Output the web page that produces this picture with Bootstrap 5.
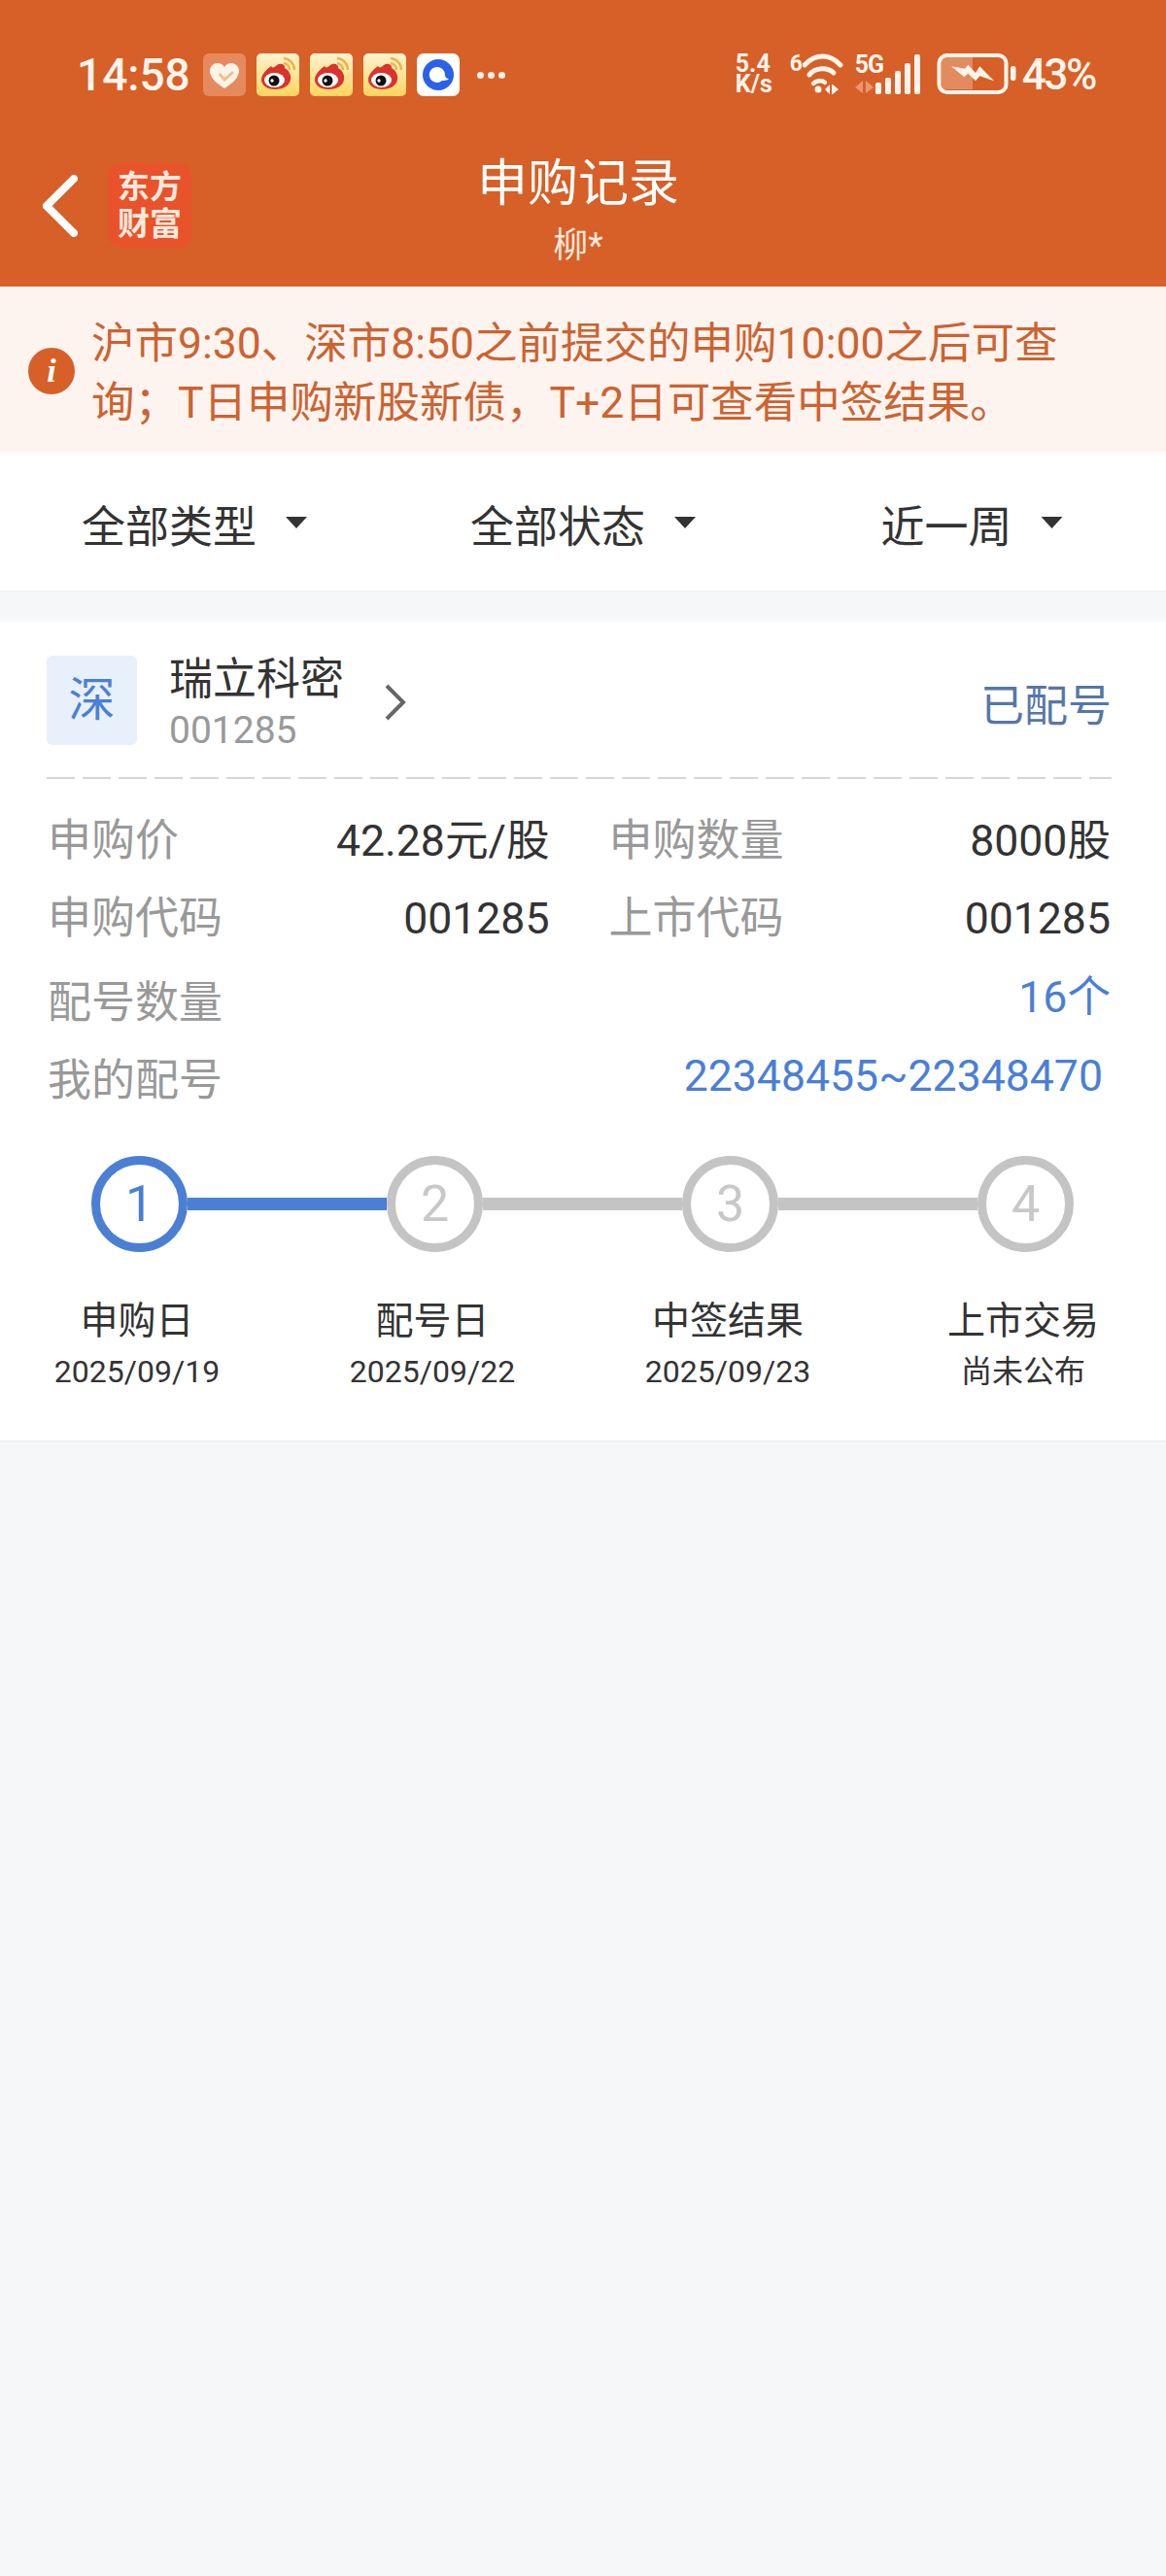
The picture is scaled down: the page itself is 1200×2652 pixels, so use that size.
<!DOCTYPE html>
<html lang="zh-CN">

<head>
    <meta charset="UTF-8">
    <meta name="viewport" content="width=device-width, initial-scale=1.0">
    <title>申购记录</title>
    <link href="https://cdn.jsdelivr.net/npm/bootstrap@5.3.3/dist/css/bootstrap.min.css" rel="stylesheet">
    <style>
        body {
            font-family: Roboto, "Noto Sans CJK SC", sans-serif;
            background-color: #f6f7f9;
            color: #333;
            width: 1200px;
            min-height: 2652px;
            font-size: 44.6px;
        }

        /* 顶部橙色区 */
        .top-wrap { background: #d66028; height: 295px; color: #fff; }
        .status-bar { height: 110px; padding: 55px 73px 0 79px; }
        .clock { font-size: 46px; font-weight: 500; line-height: 44px; color: #fff4ec; margin-right: 13px; }
        .tile-list { gap: 11px; }
        .tile { width: 44px; height: 44px; display: block; }
        .more-dots { gap: 4px; margin-left: 18px; }
        .more-dots i { width: 7px; height: 7px; background: #fdeee4; border-radius: 50%; display: block; }
        .speed { font-size: 25px; font-weight: 700; line-height: 21px; width: 38px; color: #fff4ec; }
        .wifi-six { font-size: 23px; font-weight: 700; line-height: 22px; width: 13px; margin-left: 18px; color: #fff4ec; }
        .net-col { width: 21px; margin-left: 10px; }
        .net-five { font-size: 25px; font-weight: 700; line-height: 24px; letter-spacing: -1px; color: #fff4ec; white-space: nowrap; height: 27px; }
        .batt-num { font-size: 44px; font-weight: 500; line-height: 44px; letter-spacing: -2.4px; color: #fff4ec; margin-left: 5px; }

        .nav-row { padding-top: 50px; }
        .nav-left { width: 200px; padding-left: 44px; margin-top: 8px; gap: 31px; }
        .app-logo { width: 86px; height: 87px; background: #e8532b; border-radius: 14px; font-size: 33px; font-weight: 700; line-height: 38px; color: #fde8dc; }
        .nav-mid { flex: 1; }
        .nav-right { width: 210px; }
        .page-title { font-size: 52px; line-height: 60px; }
        .page-sub { font-size: 36px; line-height: 44px; margin-top: 11px; color: #fbe6da; }

        /* 提示条 */
        .notice-bar { background: #fdf4f0; height: 170px; padding: 9px 100px 0 29px; gap: 17px; color: #cc6330; }
        .info-dot { width: 48px; height: 48px; flex: none; background: #d66028; color: #fff; font-family: "Liberation Serif", serif; font-style: italic; font-weight: 700; font-size: 34px; line-height: 48px; margin-top: -5px; }
        .notice-txt { line-height: 61px; font-size: 44.5px; }

        /* 筛选 */
        .filter-bar { background: #fff; height: 144px; border-bottom: 1px solid #f0f1f3; padding-top: 15px; }
        .filter-item { gap: 30px; font-size: 45px; }
        .tri { width: 22px; height: 12px; margin-top: -12px; background: #333; clip-path: polygon(0 0, 100% 0, 50% 100%); }

        /* 卡片 */
        .sub-card { background: #fff; margin-top: 31px; height: 844px; border-bottom: 1px solid #eeeff1; padding-top: 35px; }
        .sub-head { margin: 0 56px 0 48px; height: 92px; }
        .ex-box { width: 93px; height: 92px; background: #e8f0fb; color: #4a7fd4; border-radius: 6px; font-size: 48px; margin-right: 33px; }
        .stock-block { align-self: flex-start; }
        .stock-name { line-height: 50px; font-size: 45px; }
        .stock-code { color: #999; font-size: 39px; line-height: 46px; margin-top: 4px; }
        .name-arrow { margin-left: 42px; margin-top: 4px; }
        .state-txt { color: #5577a8; font-size: 45px; padding-top: 14px; }
        .dash-line { height: 2px; margin: 33px 56px 0 48px; background: repeating-linear-gradient(90deg, #d6d6d6 0 29px, transparent 29px 37px); }

        .info-grid { padding: 24px 57px 0 49px; }
        .info-line { height: 80px; gap: 61px; }
        .info-cell { flex: 1 1 0; }
        .lab { color: #999; font-size: 45px; }
        .blue-val { color: #4a7fd4; }
        .info-line.qty { margin-top: 7px; }
        .qty .blue-val { padding-bottom: 12px; }
        .nums .blue-val { padding-bottom: 10px; padding-right: 8px; }

        /* 进度 */
        .step-track { padding: 37px 0 0 94px; }
        .step-dot { width: 99px; height: 99px; flex: none; border: 9px solid #c4c4c4; color: #c8c8c8; font-size: 52px; font-weight: 400; }
        .step-dot.on { border-color: #4a7fd4; color: #4a7fd4; }
        .step-bar { width: 205px; height: 13px; background: #c4c4c4; }
        .step-bar.on { background: #4a7fd4; }
        .step-text { padding: 46px 0 0 1px; gap: 24px; }
        .step-col { width: 280px; }
        .step-name { font-size: 39px; line-height: 50px; }
        .step-date { font-size: 32px; line-height: 44px; margin-top: 5px; }
    </style>
</head>

<body>
    <svg width="0" height="0" class="d-block position-absolute">
        <defs>
            <linearGradient id="wbBg" x1="0" y1="0" x2="0" y2="1">
                <stop offset="0" stop-color="#fff3cf" />
                <stop offset="1" stop-color="#fbd55e" />
            </linearGradient>
            <symbol id="wbTile" viewBox="0 0 44 44">
                <rect width="44" height="44" rx="5" fill="url(#wbBg)" />
                <path d="M28 5a12 12 0 0 1 11 12M28 10a7 7 0 0 1 6 7" fill="none" stroke="#eeb24a" stroke-width="2.4" />
                <path d="M5 27C5 21 11 16 15 13C16 15 18 15 21 12C25 9 30 12 29 15C33 17 36 22 35 27C34 34 26 37 19 37C11 37 5 33 5 27Z" fill="#d9342b" />
                <ellipse cx="18.500" cy="27.500" rx="10.500" ry="7.500" fill="#fff" />
                <circle cx="18" cy="28" r="5.500" fill="#111" />
                <circle cx="16" cy="28" r="1.700" fill="#fff" />
            </symbol>
        </defs>
    </svg>

    <div class="top-wrap">
        <div class="status-bar d-flex justify-content-between align-items-start">
            <div class="d-flex align-items-center">
                <span class="clock">14:58</span>
                <div class="tile-list d-flex">
                    <svg class="tile" viewBox="0 0 44 44">
                        <rect width="44" height="44" rx="6" fill="#e68a5e" />
                        <path d="M22 36C14 31 7 25 7 18C7 13 11 10 15 10C18 10 20 11 22 14C24 11 26 10 29 10C33 10 37 13 37 18C37 25 30 31 22 36Z" fill="#fdf3e6" />
                        <path d="M17 21l5 6 9-8" fill="none" stroke="#eec08f" stroke-width="3" />
                    </svg>
                    <svg class="tile"><use href="#wbTile" /></svg>
                    <svg class="tile"><use href="#wbTile" /></svg>
                    <svg class="tile"><use href="#wbTile" /></svg>
                    <svg class="tile" viewBox="0 0 44 44">
                        <rect width="44" height="44" rx="7" fill="#fff" />
                        <circle cx="22" cy="22" r="16" fill="#2962e8" />
                        <path d="M20 14a8 8 0 0 1 9 8C29 25 31 26 33 26C31 28 28 28 26 28A8 8 0 1 1 20 14Z" fill="#fff" />
                    </svg>
                </div>
                <div class="more-dots d-flex"><i></i><i></i><i></i></div>
            </div>
            <div class="d-flex align-items-start">
                <div class="speed">5.4<br>K/s</div>
                <span class="wifi-six">6</span>
                <svg width="44" height="44" viewBox="828 55 44 44" fill="none" stroke="#fff4ec" stroke-linecap="round">
                    <path d="M830 67C841 55 856 55 867 67" stroke-width="5" />
                    <path d="M835 77C841 69 854 69 860 75" stroke-width="5" />
                    <path d="M839 86C842 83 848 82 851 85" stroke-width="4.500" />
                    <circle cx="844" cy="92" r="3.500" fill="#fff4ec" stroke="none" />
                    <path d="M851 92l5-5v10zM859 87l6 5-6 5zM858 87h1v10h-1z" fill="#fff4ec" stroke="none" />
                </svg>
                <div class="net-col">
                    <div class="net-five">5G</div>
                    <svg class="d-block" width="21" height="15" viewBox="881 83 21 15">
                        <path d="M881 91l8-7v13zM892 84l8 7-8 6z" fill="#ea9570" />
                    </svg>
                </div>
                <svg width="47" height="44" viewBox="902 55 47 44">
                    <rect x="902" y="85" width="6" height="12" rx="2" fill="#fff4ec" />
                    <rect x="912" y="80" width="6" height="17" rx="2" fill="#fff4ec" />
                    <rect x="922" y="73" width="6" height="24" rx="2" fill="#fff4ec" />
                    <rect x="932" y="65" width="6" height="32" rx="2" fill="#fff4ec" />
                    <rect x="942" y="56" width="6" height="41" rx="2" fill="#fff4ec" />
                </svg>
                <svg class="ms-3" width="83" height="44" viewBox="965 55 83 44">
                    <path d="M970 59H1002V92H970Z" fill="#e48a5f" />
                    <rect x="967.500" y="57" width="69" height="38" rx="8" fill="none" stroke="#fff4ec" stroke-width="4" />
                    <path d="M980 68.300L994 70.700L997.300 66.700L1005 75L1009.300 68.300L1024 83.300L1009.300 78.300L1005 83.300L997.300 75.700L993.300 79.300Z" fill="#fff4ec" />
                    <rect x="1041" y="68" width="5.500" height="15" rx="2.500" fill="#fff4ec" />
                </svg>
                <span class="batt-num">43%</span>
            </div>
        </div>
        <div class="nav-row d-flex align-items-start">
            <div class="nav-left d-flex align-items-center">
                <svg width="36" height="64" viewBox="0 0 36 64" fill="none" stroke="#fff" stroke-width="8" stroke-linecap="round" stroke-linejoin="miter">
                    <path d="M32 4L4 32L32 60" />
                </svg>
                <div class="app-logo d-flex flex-column align-items-center justify-content-center text-center">东方<br>财富</div>
            </div>
            <div class="nav-mid text-center">
                <div class="page-title">申购记录</div>
                <div class="page-sub">柳*</div>
            </div>
            <div class="nav-right"></div>
        </div>
    </div>

    <div class="notice-bar d-flex align-items-center">
        <div class="info-dot rounded-circle text-center">i</div>
        <div class="notice-txt">沪市9:30、深市8:50之前提交的申购10:00之后可查询；T日申购新股新债，T+2日可查看中签结果。</div>
    </div>

    <div class="filter-bar row g-0 align-items-center">
        <div class="col-4 filter-item d-flex justify-content-center align-items-center"><span>全部类型</span><i class="tri"></i></div>
        <div class="col-4 filter-item d-flex justify-content-center align-items-center"><span>全部状态</span><i class="tri"></i></div>
        <div class="col-4 filter-item d-flex justify-content-center align-items-center"><span>近一周</span><i class="tri"></i></div>
    </div>

    <div class="sub-card">
        <div class="sub-head d-flex align-items-center">
            <div class="ex-box d-flex align-items-center justify-content-center">深</div>
            <div class="stock-block">
                <div class="stock-name">瑞立科密</div>
                <div class="stock-code">001285</div>
            </div>
            <svg class="name-arrow" width="22" height="38" viewBox="0 0 22 38" fill="none" stroke="#666" stroke-width="4">
                <path d="M2 2L19 19L2 36" />
            </svg>
            <div class="state-txt ms-auto">已配号</div>
        </div>
        <div class="dash-line"></div>

        <div class="info-grid">
            <div class="info-line d-flex">
                <div class="info-cell d-flex justify-content-between align-items-center"><span class="lab">申购价</span><span>42.28元/股</span></div>
                <div class="info-cell d-flex justify-content-between align-items-center"><span class="lab">申购数量</span><span>8000股</span></div>
            </div>
            <div class="info-line d-flex">
                <div class="info-cell d-flex justify-content-between align-items-center"><span class="lab">申购代码</span><span>001285</span></div>
                <div class="info-cell d-flex justify-content-between align-items-center"><span class="lab">上市代码</span><span>001285</span></div>
            </div>
            <div class="info-line qty d-flex justify-content-between align-items-center"><span class="lab">配号数量</span><span class="blue-val">16个</span></div>
            <div class="info-line nums d-flex justify-content-between align-items-center"><span class="lab">我的配号</span><span class="blue-val">22348455~22348470</span></div>
        </div>

        <div class="step-track d-flex align-items-center">
            <div class="step-dot on rounded-circle d-flex align-items-center justify-content-center">1</div>
            <div class="step-bar on"></div>
            <div class="step-dot rounded-circle d-flex align-items-center justify-content-center">2</div>
            <div class="step-bar"></div>
            <div class="step-dot rounded-circle d-flex align-items-center justify-content-center">3</div>
            <div class="step-bar"></div>
            <div class="step-dot rounded-circle d-flex align-items-center justify-content-center">4</div>
        </div>
        <div class="step-text d-flex text-center">
            <div class="step-col"><div class="step-name">申购日</div><div class="step-date">2025/09/19</div></div>
            <div class="step-col"><div class="step-name">配号日</div><div class="step-date">2025/09/22</div></div>
            <div class="step-col"><div class="step-name">中签结果</div><div class="step-date">2025/09/23</div></div>
            <div class="step-col"><div class="step-name">上市交易</div><div class="step-date">尚未公布</div></div>
        </div>
    </div>

    <script src="https://cdn.jsdelivr.net/npm/bootstrap@5.3.3/dist/js/bootstrap.bundle.min.js"></script>
</body>

</html>
